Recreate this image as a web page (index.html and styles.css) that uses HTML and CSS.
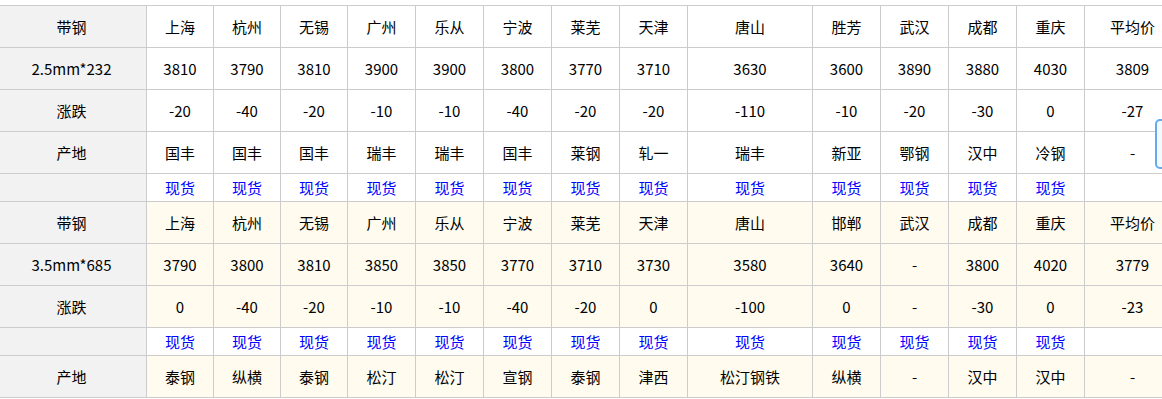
FILE: index.html
```html
<!DOCTYPE html>
<html lang="zh">
<head>
<meta charset="utf-8">
<title>带钢价格</title>
<link rel="stylesheet" href="styles.css">
</head>
<body>
<div class="sheet">
  <div class="c h">带钢</div><div class="c">上海</div><div class="c">杭州</div><div class="c">无锡</div><div class="c">广州</div><div class="c">乐从</div><div class="c">宁波</div><div class="c">莱芜</div><div class="c">天津</div><div class="c">唐山</div><div class="c">胜芳</div><div class="c">武汉</div><div class="c">成都</div><div class="c">重庆</div><div class="c">平均价</div>
  <div class="c h">2.5mm*232</div><div class="c">3810</div><div class="c">3790</div><div class="c">3810</div><div class="c">3900</div><div class="c">3900</div><div class="c">3800</div><div class="c">3770</div><div class="c">3710</div><div class="c">3630</div><div class="c">3600</div><div class="c">3890</div><div class="c">3880</div><div class="c">4030</div><div class="c">3809</div>
  <div class="c h">涨跌</div><div class="c">-20</div><div class="c">-40</div><div class="c">-20</div><div class="c">-10</div><div class="c">-10</div><div class="c">-40</div><div class="c">-20</div><div class="c">-20</div><div class="c">-110</div><div class="c">-10</div><div class="c">-20</div><div class="c">-30</div><div class="c">0</div><div class="c">-27</div>
  <div class="c h">产地</div><div class="c">国丰</div><div class="c">国丰</div><div class="c">国丰</div><div class="c">瑞丰</div><div class="c">瑞丰</div><div class="c">国丰</div><div class="c">莱钢</div><div class="c">轧一</div><div class="c">瑞丰</div><div class="c">新亚</div><div class="c">鄂钢</div><div class="c">汉中</div><div class="c">冷钢</div><div class="c">-</div>
  <div class="c s h"></div><div class="c s l">现货</div><div class="c s l">现货</div><div class="c s l">现货</div><div class="c s l">现货</div><div class="c s l">现货</div><div class="c s l">现货</div><div class="c s l">现货</div><div class="c s l">现货</div><div class="c s l">现货</div><div class="c s l">现货</div><div class="c s l">现货</div><div class="c s l">现货</div><div class="c s l">现货</div><div class="c s"></div>

  <div class="c h">带钢</div><div class="c y">上海</div><div class="c y">杭州</div><div class="c y">无锡</div><div class="c y">广州</div><div class="c y">乐从</div><div class="c y">宁波</div><div class="c y">莱芜</div><div class="c y">天津</div><div class="c y">唐山</div><div class="c y">邯郸</div><div class="c y">武汉</div><div class="c y">成都</div><div class="c y">重庆</div><div class="c y">平均价</div>
  <div class="c h">3.5mm*685</div><div class="c y">3790</div><div class="c y">3800</div><div class="c y">3810</div><div class="c y">3850</div><div class="c y">3850</div><div class="c y">3770</div><div class="c y">3710</div><div class="c y">3730</div><div class="c y">3580</div><div class="c y">3640</div><div class="c y">-</div><div class="c y">3800</div><div class="c y">4020</div><div class="c y">3779</div>
  <div class="c h">涨跌</div><div class="c y">0</div><div class="c y">-40</div><div class="c y">-20</div><div class="c y">-10</div><div class="c y">-10</div><div class="c y">-40</div><div class="c y">-20</div><div class="c y">0</div><div class="c y">-100</div><div class="c y">0</div><div class="c y">-</div><div class="c y">-30</div><div class="c y">0</div><div class="c y">-23</div>
  <div class="c s h"></div><div class="c s l">现货</div><div class="c s l">现货</div><div class="c s l">现货</div><div class="c s l">现货</div><div class="c s l">现货</div><div class="c s l">现货</div><div class="c s l">现货</div><div class="c s l">现货</div><div class="c s l">现货</div><div class="c s l">现货</div><div class="c s l">现货</div><div class="c s l">现货</div><div class="c s l">现货</div><div class="c s"></div>
  <div class="c h">产地</div><div class="c y">泰钢</div><div class="c y">纵横</div><div class="c y">泰钢</div><div class="c y">松汀</div><div class="c y">松汀</div><div class="c y">宣钢</div><div class="c y">泰钢</div><div class="c y">津西</div><div class="c y">松汀钢铁</div><div class="c y">纵横</div><div class="c y">-</div><div class="c y">汉中</div><div class="c y">汉中</div><div class="c y">-</div>
</div>
<div class="float-tab"></div>
</body>
</html>
```

FILE: styles.css
```css
html, body {
  margin: 0;
  padding: 0;
  background: #ffffff;
  overflow: hidden;
}
body {
  font-family: "Noto Sans CJK SC", "Noto Sans", sans-serif;
  font-size: 15px;
  color: #000000;
}
.sheet {
  display: grid;
  grid-template-columns: 150px 67px 67px 67px 68px 68px 68px 68px 68px 125px 68px 68px 68px 68px 96px;
  width: max-content;
  margin: 5px 0 0 -3px;
  border-top: 1px solid #cccccc;
}
.c {
  box-sizing: border-box;
  height: 42px;
  display: flex;
  align-items: center;
  justify-content: center;
  border-right: 1px solid #cccccc;
  border-bottom: 1px solid #cccccc;
  background: #ffffff;
  white-space: nowrap;
  line-height: 1;
}
.c.s {
  height: 28px;
}
.c.h {
  background: #f2f2f2;
}
.c.y {
  background: #fffbee;
}
.c.l {
  color: #0000ff;
}
.float-tab {
  position: fixed;
  left: 1155px;
  top: 119px;
  width: 20px;
  height: 50px;
  box-sizing: border-box;
  border: 2px solid #66aaee;
  border-radius: 5px;
  background: #f4f9ff;
}
```
